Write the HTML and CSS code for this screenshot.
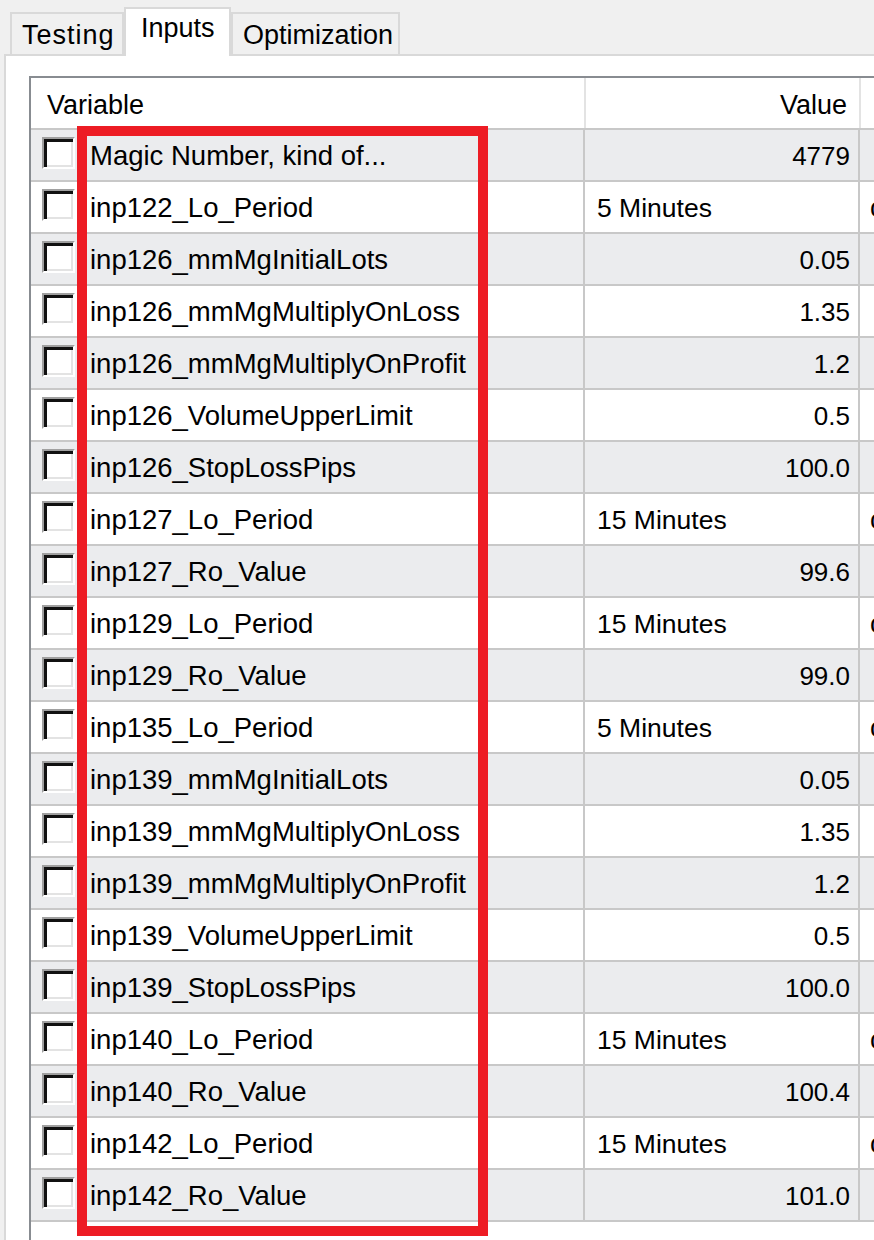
FILE: index.html
```html
<!DOCTYPE html>
<html lang="en">
<head>
    <meta charset="UTF-8">
    <meta name="viewport" content="width=device-width, initial-scale=1.0">
    <title>Inputs</title>
    <link rel="stylesheet" href="styles.css">
</head>
<body>
    <div class="tabs">
        <div class="tab tab-first">Testing</div>
        <div class="tab tab-active">Inputs</div>
        <div class="tab tab-last">Optimization</div>
    </div>

    <div class="panel">
        <div class="listview">
            <div class="head">
                <div class="hcell hcell-var">Variable</div>
                <div class="hcell hcell-val">Value</div>
                <div class="hcell hcell-extra"></div>
            </div>

            <div class="row"><div class="check"><span class="box"></span></div><div class="name">Magic Number, kind of...</div><div class="val num">4779</div><div class="extra"></div></div>
            <div class="row"><div class="check"><span class="box"></span></div><div class="name">inp122_Lo_Period</div><div class="val">5 Minutes</div><div class="extra">current</div></div>
            <div class="row"><div class="check"><span class="box"></span></div><div class="name">inp126_mmMgInitialLots</div><div class="val num">0.05</div><div class="extra"></div></div>
            <div class="row"><div class="check"><span class="box"></span></div><div class="name">inp126_mmMgMultiplyOnLoss</div><div class="val num">1.35</div><div class="extra"></div></div>
            <div class="row"><div class="check"><span class="box"></span></div><div class="name">inp126_mmMgMultiplyOnProfit</div><div class="val num">1.2</div><div class="extra"></div></div>
            <div class="row"><div class="check"><span class="box"></span></div><div class="name">inp126_VolumeUpperLimit</div><div class="val num">0.5</div><div class="extra"></div></div>
            <div class="row"><div class="check"><span class="box"></span></div><div class="name">inp126_StopLossPips</div><div class="val num">100.0</div><div class="extra"></div></div>
            <div class="row"><div class="check"><span class="box"></span></div><div class="name">inp127_Lo_Period</div><div class="val">15 Minutes</div><div class="extra">current</div></div>
            <div class="row"><div class="check"><span class="box"></span></div><div class="name">inp127_Ro_Value</div><div class="val num">99.6</div><div class="extra"></div></div>
            <div class="row"><div class="check"><span class="box"></span></div><div class="name">inp129_Lo_Period</div><div class="val">15 Minutes</div><div class="extra">current</div></div>
            <div class="row"><div class="check"><span class="box"></span></div><div class="name">inp129_Ro_Value</div><div class="val num">99.0</div><div class="extra"></div></div>
            <div class="row"><div class="check"><span class="box"></span></div><div class="name">inp135_Lo_Period</div><div class="val">5 Minutes</div><div class="extra">current</div></div>
            <div class="row"><div class="check"><span class="box"></span></div><div class="name">inp139_mmMgInitialLots</div><div class="val num">0.05</div><div class="extra"></div></div>
            <div class="row"><div class="check"><span class="box"></span></div><div class="name">inp139_mmMgMultiplyOnLoss</div><div class="val num">1.35</div><div class="extra"></div></div>
            <div class="row"><div class="check"><span class="box"></span></div><div class="name">inp139_mmMgMultiplyOnProfit</div><div class="val num">1.2</div><div class="extra"></div></div>
            <div class="row"><div class="check"><span class="box"></span></div><div class="name">inp139_VolumeUpperLimit</div><div class="val num">0.5</div><div class="extra"></div></div>
            <div class="row"><div class="check"><span class="box"></span></div><div class="name">inp139_StopLossPips</div><div class="val num">100.0</div><div class="extra"></div></div>
            <div class="row"><div class="check"><span class="box"></span></div><div class="name">inp140_Lo_Period</div><div class="val">15 Minutes</div><div class="extra">current</div></div>
            <div class="row"><div class="check"><span class="box"></span></div><div class="name">inp140_Ro_Value</div><div class="val num">100.4</div><div class="extra"></div></div>
            <div class="row"><div class="check"><span class="box"></span></div><div class="name">inp142_Lo_Period</div><div class="val">15 Minutes</div><div class="extra">current</div></div>
            <div class="row"><div class="check"><span class="box"></span></div><div class="name">inp142_Ro_Value</div><div class="val num">101.0</div><div class="extra"></div></div>
        </div>
    </div>

    <!-- red annotation box drawn over the variable column -->
    <div class="highlight"></div>
</body>
</html>
```

FILE: styles.css
```css
* {
    margin: 0;
    padding: 0;
    box-sizing: border-box;
}
body {
    width: 874px;
    height: 1240px;
    overflow: hidden;
    background-color: #f0f0f0;
    font-family: "Liberation Sans", Arial, sans-serif;
    font-size: 26px;
    color: #000;
    position: relative;
}

/* tabs */
.tabs {
    display: flex;
    align-items: flex-end;
    height: 54px;
    padding-left: 10px;
    font-size: 27px;
}
.tab {
    height: 42px;
    border: 2px solid #d9d9d9;
    border-bottom: none;
    background-color: #f0f0f0;
    padding-left: 10px;
    line-height: 42px;
    white-space: nowrap;
}
.tab-first {
    width: 114px;
    letter-spacing: 1px;
}
.tab-active {
    position: relative;
    width: 107px;
    height: 49px;
    margin-bottom: -2px;
    background-color: #fff;
    padding-left: 15px;
    line-height: 38px;
    z-index: 1;
}
.tab-last {
    width: 169px;
}

/* panel */
.panel {
    margin-left: 4px;
    height: 1186px;
    border-left: 2px solid #d9d9d9;
    border-top: 2px solid #d9d9d9;
    background-color: #fff;
    padding: 20px 0 0 23px;
}
.listview {
    width: 1100px;
    height: 1200px;
    border-left: 2px solid #888c91;
    border-top: 2px solid #888c91;
    background-color: #fff;
}

.head {
    display: flex;
    height: 52px;
    border-bottom: 2px solid #c8c8c8;
    font-size: 27px;
}
.hcell {
    height: 50px;
    line-height: 54px;
    white-space: nowrap;
}
.hcell-var {
    width: 555px;
    padding-left: 16px;
    border-right: 2px solid #e3e3e3;
}
.hcell-val {
    width: 275px;
    text-align: right;
    padding-right: 12px;
    border-right: 2px solid #e3e3e3;
}
.hcell-extra {
    padding-left: 10px;
}

.row {
    display: flex;
    height: 52px;
    border-bottom: 2px solid #c8c8c8;
    background-color: #fff;
}
.row:nth-child(even) {
    background-color: #ebecee;
}
.row > div {
    height: 50px;
    line-height: 52px;
    white-space: nowrap;
}
.check {
    width: 46px;
    display: flex;
    align-items: center;
    padding-left: 11px;
}
.box {
    display: block;
    width: 33px;
    height: 32px;
    margin-top: -4px;
    background-color: #fff;
    border: 2px solid;
    border-color: #a0a0a0 #fff #fff #a0a0a0;
    box-shadow: inset 3px 3px 0 #111, inset -2px -2px 0 #e3e3e3;
}
.name {
    width: 508px;
    padding-left: 13px;
    border-right: 2px solid #c8c8c8;
    font-size: 27.5px;
}
.val {
    width: 275px;
    padding-left: 12px;
    border-right: 2px solid #c8c8c8;
    font-size: 26.5px;
}
.val.num {
    text-align: right;
    padding-right: 8px;
    font-size: 26px;
}
.extra {
    padding-left: 10px;
    font-size: 27px;
}

.highlight {
    position: absolute;
    left: 77px;
    top: 126px;
    width: 411px;
    height: 1110px;
    border: 10px solid #ed1c24;
}
```
